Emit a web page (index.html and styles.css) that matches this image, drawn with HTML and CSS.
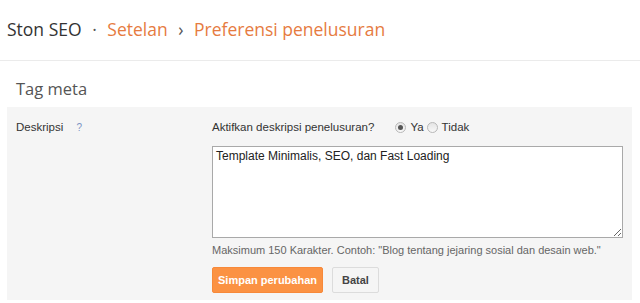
FILE: index.html
```html
<!DOCTYPE html>
<html lang="id">
<head>
    <meta charset="UTF-8">
    <title>Preferensi penelusuran</title>
    <link rel="stylesheet" href="styles.css">
</head>
<body>
    <div class="header">
        <span class="blog-name">Ston SEO</span>
        <span class="sep">&middot;</span>
        <span class="crumb">Setelan</span>
        <span class="sep">&rsaquo;</span>
        <span class="crumb">Preferensi penelusuran</span>
    </div>

    <h2 class="section-title">Tag meta</h2>

    <div class="panel">
        <div class="label">
            Deskripsi <span class="help">?</span>
        </div>
        <div class="field">
            <div class="question">
                <span class="question-text">Aktifkan deskripsi penelusuran?</span>
                <span class="radio checked"></span><span class="radio-label">Ya</span>
                <span class="radio"></span><span class="radio-label">Tidak</span>
            </div>
            <textarea class="desc">Template Minimalis, SEO, dan Fast Loading</textarea>
            <div class="hint">Maksimum 150 Karakter. Contoh: "Blog tentang jejaring sosial dan desain web."</div>
            <div class="actions">
                <button class="btn btn-primary">Simpan perubahan</button>
                <button class="btn">Batal</button>
            </div>
        </div>
    </div>
</body>
</html>
```

FILE: styles.css
```css
body {
    margin: 0;
    background: #fff;
    font-family: Arial, "Liberation Sans", sans-serif;
    color: #333;
}
.header {
    height: 61px;
    border-bottom: 1px solid #ebebeb;
    padding: 16px 0 0 7px;
    box-sizing: border-box;
    font-family: "Open Sans", sans-serif;
    font-size: 17.5px;
    line-height: 26px;
    color: #333;
    white-space: nowrap;
}
.sep {
    color: #555;
    margin: 0 6px;
}
.crumb {
    color: #e67b3f;
}
.section-title {
    margin: 0;
    padding: 16px 0 0 16px;
    height: 46px;
    box-sizing: border-box;
    font-family: "Open Sans", sans-serif;
    font-size: 16.5px;
    font-weight: normal;
    line-height: 24px;
    color: #555;
}
.panel {
    display: flex;
    margin: 0 8px 0 7px;
    padding: 10px 0 7px;
    background: #f5f5f5;
}
.label {
    width: 196px;
    padding-left: 9px;
    font-size: 11.5px;
    line-height: 20px;
    color: #333;
}
.help {
    margin-left: 10px;
    font-size: 10px;
    color: #7b94c4;
}
.field {
    flex: 1;
}
.question {
    display: flex;
    align-items: center;
    height: 20px;
    font-size: 11.5px;
    color: #333;
}
.question-text {
    margin-right: 21px;
}
.radio {
    width: 9px;
    height: 9px;
    border: 1px solid #b8b8b8;
    border-radius: 50%;
    background: linear-gradient(#e4e4e4, #f8f8f8);
    position: relative;
    margin-right: 4px;
}
.radio.checked::after {
    content: "";
    position: absolute;
    left: 2px;
    top: 2px;
    width: 5px;
    height: 5px;
    border-radius: 50%;
    background: #555;
}
.radio-label {
    margin-right: 3px;
}
.desc {
    display: block;
    margin-top: 9px;
    width: 411px;
    height: 92px;
    box-sizing: border-box;
    border: 1px solid #a9a9a9;
    padding: 2px 3px;
    font-family: Arial, "Liberation Sans", sans-serif;
    font-size: 12px;
    line-height: 15px;
    color: #222;
    background: #fff;
    resize: vertical;
}
.hint {
    margin-top: 4px;
    font-size: 11px;
    line-height: 16px;
    color: #666;
    white-space: nowrap;
}
.actions {
    display: flex;
    gap: 9px;
    margin-top: 9px;
}
.btn {
    height: 26px;
    padding: 0 9px;
    border: 1px solid #dcdcdc;
    border-radius: 2px;
    background: #f5f5f5;
    font-family: Arial, "Liberation Sans", sans-serif;
    font-size: 11px;
    font-weight: bold;
    color: #444;
    white-space: nowrap;
    cursor: pointer;
}
.btn-primary {
    width: 111px;
    padding: 0;
    border-color: #f7893a;
    background: #fb9243;
    color: #fff;
}
```
